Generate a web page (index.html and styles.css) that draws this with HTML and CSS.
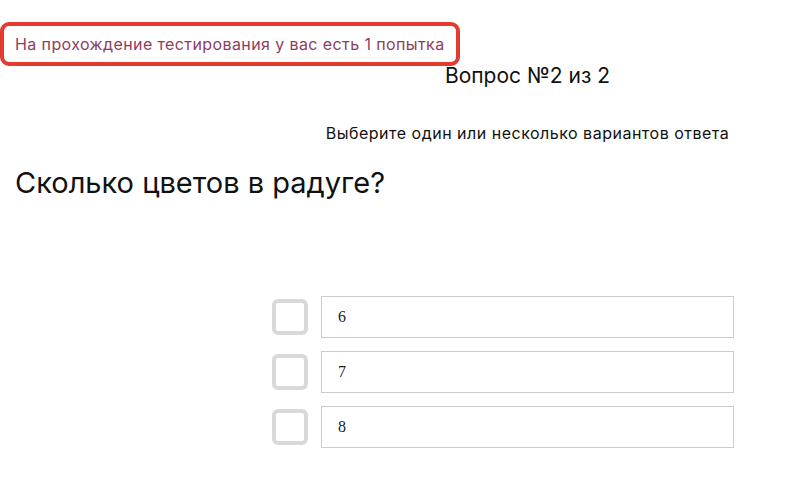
FILE: index.html
```html
<!DOCTYPE html>
<html lang="ru">
<head>
    <meta charset="UTF-8">
    <meta name="viewport" content="width=device-width, initial-scale=1.0">
    <title>Тестирование</title>
    <link rel="stylesheet" href="styles.css">
</head>
<body>

    <div class="attempts">На прохождение тестирования у вас есть 1 попытка</div>

    <div class="test">
        <div class="test-head">
            <div class="spacer"></div>
            <div class="head-col">
                <div class="counter">Вопрос №2 из 2</div>
                <div class="hint">Выберите один или несколько вариантов ответа</div>
            </div>
        </div>

        <h1 class="question">Сколько цветов в радуге?</h1>

        <div class="answers">
            <label class="answer">
                <span class="check"></span>
                <span class="answer-text">6</span>
            </label>
            <label class="answer">
                <span class="check"></span>
                <span class="answer-text">7</span>
            </label>
            <label class="answer">
                <span class="check"></span>
                <span class="answer-text">8</span>
            </label>
        </div>
    </div>

</body>
</html>
```

FILE: styles.css
```css
body {
    font-family: Inter, 'Noto Sans', sans-serif;
    background-color: #fff;
    color: #111;
    margin: 0;
    padding: 0;
}
.attempts {
    display: inline-block;
    margin-top: 22px;
    padding: 8px 11px;
    border: 4px solid #e43a2f;
    border-radius: 9px;
    font-size: 16px;
    line-height: 20px;
    letter-spacing: 0.4px;
    color: #8e3d60;
}
.test {
    padding: 0 15px;
}
.test-head {
    display: flex;
}
.spacer {
    width: 306px;
}
.head-col {
    width: 413px;
    text-align: center;
}
.counter {
    font-size: 21px;
    line-height: 26px;
    margin-top: -3px;
}
.hint {
    font-size: 16px;
    line-height: 20px;
    letter-spacing: 0.5px;
    margin-top: 34px;
}
.question {
    font-size: 29px;
    font-weight: 400;
    line-height: 38px;
    margin: 21px 0 0;
}
.answers {
    display: flex;
    flex-direction: column;
    gap: 13px;
    margin-top: 94px;
    padding-left: 257px;
}
.answer {
    display: flex;
    align-items: center;
    gap: 13px;
}
.check {
    width: 28px;
    height: 28px;
    border: 4px solid #d9d9d9;
    border-radius: 6px;
    flex-shrink: 0;
}
.answer-text {
    width: 379px;
    height: 40px;
    border: 1px solid #cccccc;
    padding: 0 16px;
    display: flex;
    align-items: center;
    font-family: 'Liberation Serif', serif;
    font-size: 16px;
    color: #222;
}
```
